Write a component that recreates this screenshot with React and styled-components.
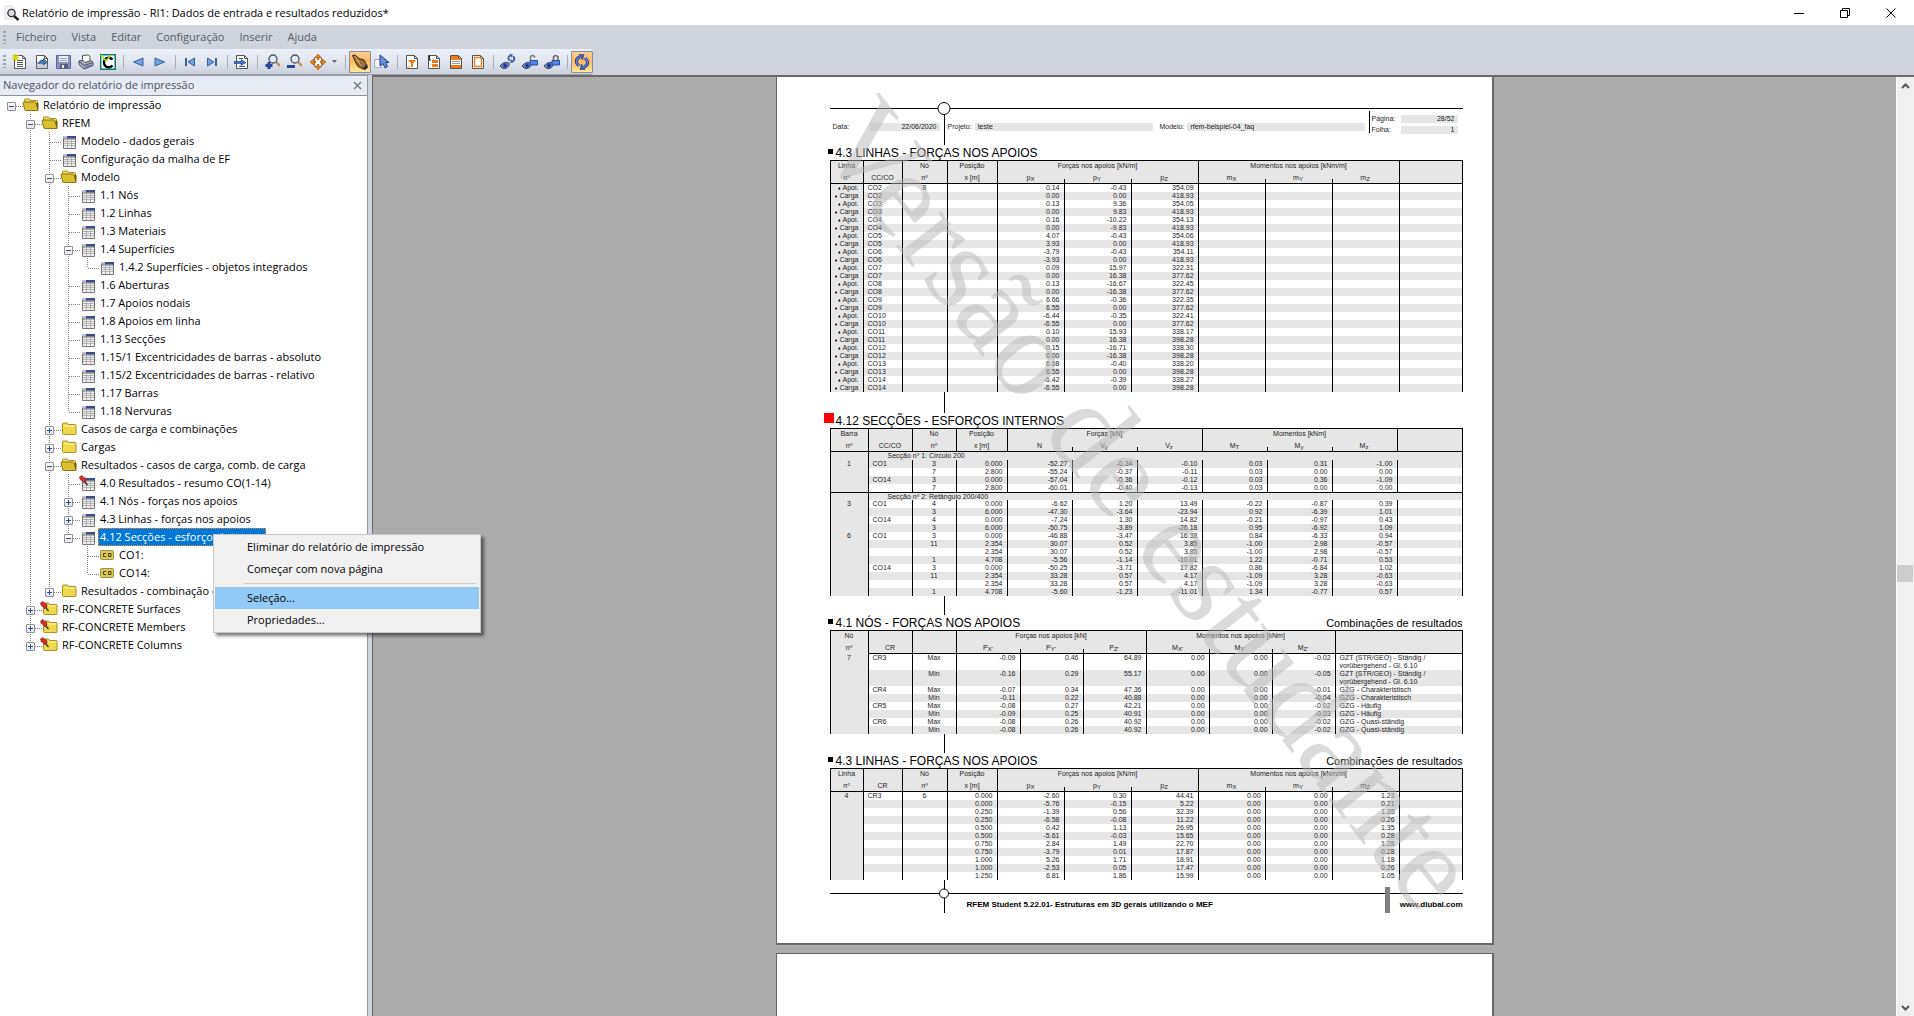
import React from "react";
import styled, { createGlobalStyle, css } from "styled-components";

const UI_FONT = '"Open Sans", "Noto Sans", sans-serif';
const PRINT_FONT = '"Liberation Sans", Arial, sans-serif';
const STRIPE = "#e6e6e6";

const GlobalStyle = createGlobalStyle`
  *, *::before, *::after { box-sizing: border-box; }
  body { margin: 0; font-family: ${UI_FONT}; font-size: 11px; color: #000; }
  button { font: inherit; color: inherit; background: none; border: 0; padding: 0; margin: 0; }
`;

/* ---------- window frame ---------- */

const Window = styled.div`
  display: flex;
  flex-direction: column;
  height: 100vh;
  overflow: hidden;
  background: #d0d4dd;
`;

const TitleBar = styled.header`
  display: flex;
  align-items: center;
  height: 25px;
  flex: none;
  background: #fff;
  padding-left: 4px;
`;

const TitleText = styled.h1`
  flex: 1;
  margin: 0 0 0 2px;
  font-size: 11px;
  font-weight: 400;
  line-height: 24px;
  white-space: nowrap;
`;

const WindowButton = styled.button`
  display: flex;
  align-items: center;
  justify-content: center;
  width: 46px;
  height: 24px;
`;

const MenuBar = styled.nav`
  display: flex;
  align-items: center;
  gap: 15px;
  height: 24px;
  flex: none;
  padding-left: 3px;
  color: #565c6b;
`;

const Grip = styled.span`
  width: 3px;
  height: 13px;
  margin-right: ${(p) => (p.$tight ? "3px" : "-5px")};
  background: repeating-linear-gradient(#9da2ae 0 2px, transparent 2px 4px);
`;

const MenuEntry = styled.button`
  line-height: 24px;
`;

const ToolBar = styled.div`
  display: flex;
  align-items: center;
  align-self: flex-start;
  height: 26px;
  flex: none;
  padding-left: 3px;
  background: linear-gradient(#ebeff8, #e3e7f0 45%, #cdd1dc);
  border-bottom: 1px solid #9a9ea9;
  border-radius: 0 3px 3px 0;
`;

const ToolButton = styled.button`
  display: flex;
  align-items: center;
  justify-content: center;
  width: 22px;
  height: 22px;
  ${(p) =>
    p.$active &&
    css`
      border: 1px solid #8c8f98;
      border-radius: 1px;
      background: linear-gradient(#fbcf9c, #fbb85f 45%, #ffe79a);
    `}
`;

const DropButton = styled(ToolButton)`
  width: 36px;
  gap: 6px;
`;

const ToolSeparator = styled.span`
  width: 1px;
  height: 14px;
  margin: 0 3px 0 4px;
  background: #a9adb8;
`;

/* ---------- navigator ---------- */

const Workspace = styled.div`
  display: grid;
  grid-template-columns: 368px 4px 1fr;
  flex: 1;
  min-height: 0;
`;

const Navigator = styled.aside`
  display: flex;
  flex-direction: column;
  min-height: 0;
  background: #fff;
  border-top: 1px solid #9a9ea9;
  border-right: 1px solid #9a9a9a;
`;

const NavigatorHead = styled.div`
  display: flex;
  align-items: center;
  justify-content: space-between;
  height: 20px;
  padding: 0 5px 0 3px;
  background: #e7ebf4;
  border-bottom: 1px solid #8f939e;
  color: #4b5160;
`;

const NavigatorTitle = styled.h2`
  margin: 0;
  font-size: 11px;
  line-height: 16px;
  height: 18px;
  font-weight: 400;
`;

const Tree = styled.ul`
  margin: 0;
  padding: 0 0 0 2px;
  list-style: none;
`;

const TreeRow = styled.li`
  display: flex;
  height: 18px;
`;

const Guide = styled.span`
  position: relative;
  display: flex;
  justify-content: center;
  width: 19px;
  height: 18px;
  flex: none;
  padding-top: 6px;
  background-image: ${(p) =>
    p.$line ? "repeating-linear-gradient(#808080 0 1px, transparent 1px 2px)" : "none"};
  background-repeat: no-repeat;
  background-position: 9px 0;
  background-size: 1px ${(p) => (p.$line === "half" ? "10px" : "18px")};
`;

const Branch = styled.span`
  position: absolute;
  left: 10px;
  top: 10px;
  width: 11px;
  height: 1px;
  background: repeating-linear-gradient(90deg, #808080 0 1px, transparent 1px 2px);
`;

const Toggle = styled.button`
  position: relative;
  width: 9px;
  height: 9px;
  display: flex;
  border: 1px solid #919191;
  border-radius: 1px;
  background: linear-gradient(#fff, #e4e4e4);
`;

const IconSlot = styled.span`
  width: 22px;
  height: 18px;
  flex: none;
`;

const NodeLabel = styled.span`
  height: 18px;
  line-height: 18px;
  white-space: nowrap;
  ${(p) =>
    p.$selected &&
    css`
      margin-left: -2px;
      padding: 0 2px;
      background: #0078d7;
      color: #fff;
      outline: 1px dotted #ff8728;
      outline-offset: -1px;
    `}
`;

/* ---------- preview ---------- */

const Preview = styled.main`
  display: grid;
  grid-template-columns: 1fr 18px;
  min-height: 0;
  border-top: 2px solid #696969;
  border-left: 1px solid #696969;
  background: #ababab;
`;

const PageStack = styled.div`
  display: flex;
  flex-direction: column;
  align-items: center;
  gap: 8px;
  min-height: 0;
  overflow: hidden;
`;

const Sheet = styled.article`
  position: relative;
  width: 718px;
  flex: none;
  padding: 31px 29px 30px 53px;
  background: #fff;
  border: solid #696969;
  border-width: 0 2px 2px 1px;
  font-family: ${PRINT_FONT};
  font-size: 7px;
  line-height: 8px;
  color: #1c1c1c;
`;

const NextSheet = styled(Sheet)`
  flex: 1 0 60px;
  border-width: 1px 2px 0 1px;
`;

const Watermark = styled.svg`
  position: absolute;
  inset: 0;
  width: 100%;
  height: 100%;
  overflow: visible;
  pointer-events: none;
`;

const ScrollTrack = styled.div`
  display: flex;
  flex-direction: column;
  background: #f0f0f0;
  border-left: 1px solid #fff;
`;

const ScrollArrow = styled.button`
  display: flex;
  align-items: center;
  justify-content: center;
  height: 17px;
`;

const ScrollGap = styled.div`
  flex: ${(p) => p.$grow} 0 0;
`;

const ScrollThumb = styled.div`
  height: 17px;
  margin-right: 1px;
  background: #cdcdcd;
`;

/* ---------- printed sheet ---------- */

const Rule = styled.div`
  height: 1px;
  background: #000;
`;

const SheetHead = styled.header`
  position: relative;
`;

const HeadFields = styled.div`
  display: flex;
  height: 36px;
`;

const Field = styled.div`
  display: flex;
  gap: ${(p) => p.$gap || 3}px;
  flex: ${(p) => p.$flex || "none"};
  width: ${(p) => (p.$width ? p.$width + "px" : "auto")};
  margin-top: 14px;
  padding: 0 4px 0 3px;
`;

const FieldValue = styled.span`
  flex: 1;
  height: 8px;
  padding: 0 3px;
  background: ${STRIPE};
  text-align: ${(p) => (p.$end ? "right" : "left")};
`;

const Stem = styled.div`
  width: 1px;
  height: ${(p) => (p.$height ? p.$height + "px" : "auto")};
  margin-left: ${(p) => (p.$inline ? 0 : 114)}px;
  background: #000;
`;

const PageNumbers = styled.div`
  display: grid;
  grid-template-columns: 26px 57px;
  grid-auto-rows: 8px;
  gap: 3px;
  height: 22px;
  margin: 2px 5px 0 0;
  padding: 4px 0 0 2px;
  border-left: 1px solid #000;
`;

const Ring = styled.svg`
  position: absolute;
  left: 107px;
  top: ${(p) => p.$top}px;
`;

const SectionHead = styled.div`
  display: flex;
  height: 15px;
  margin-left: -6px;
`;

const Marker = styled.span`
  flex: none;
  width: ${(p) => (p.$current ? 10 : 5)}px;
  height: ${(p) => (p.$current ? 10 : 5)}px;
  margin: ${(p) => (p.$current ? "0 2px 0 0" : "4px 3px 0 4px")};
  background: ${(p) => (p.$current ? "#f00" : "#000")};
`;

const SectionTitle = styled.h3`
  flex: 1;
  margin: 0;
  font-size: 12px;
  line-height: 17px;
  font-weight: 400;
  color: #000;
`;

const SectionNote = styled.span`
  font-size: 11px;
  line-height: 17px;
  color: #000;
`;

const DataTable = styled.table`
  width: 100%;
  table-layout: fixed;
  border-collapse: separate;
  border-spacing: 0;
  th, td { padding: 0; font-weight: 400; white-space: nowrap; }
`;

const HeadCell = styled.th`
  position: relative;
  height: 12px;
  line-height: ${(p) => (p.$top ? 9 : 10)}px;
  vertical-align: ${(p) => (p.$top ? "top" : "middle")};
  background: ${STRIPE};
  text-align: center;
  border: 0 solid #000;
  border-top-width: ${(p) => (p.$top ? 1 : 0)}px;
  border-bottom-width: ${(p) => (p.$bottom ? 1 : 0)}px;
  border-left-width: ${(p) => (p.$tick ? 0 : 1)}px;
  &:last-child { border-right-width: 1px; }
  ${(p) =>
    p.$tick &&
    css`
      &::before {
        content: "";
        position: absolute;
        left: 0;
        bottom: 0;
        width: 1px;
        height: 4px;
        background: #000;
      }
    `}
`;

const Sub = styled.span`
  font-size: 6px;
  position: relative;
  top: 1px;
`;

const Diamond = styled.span`
  font-size: 5px;
  color: #000;
  margin-right: 2px;
`;

const pads = {
  right: "0 4px 0 0",
  left: "0 0 0 4px",
  center: "0",
  support: "0 4px 0 0",
};

const Cell = styled.td`
  height: ${(p) => p.$height || 8}px;
  line-height: 8px;
  vertical-align: top;
  border-left: 1px solid #000;
  background: ${(p) => (p.$shade ? STRIPE : "#fff")};
  && {
    padding: ${(p) => pads[p.$align]};
    white-space: ${(p) => (p.$wrap ? "pre-line" : "nowrap")};
  }
  text-align: ${(p) => (p.$align === "support" ? "right" : p.$align)};
  &:last-child { border-right: 1px solid #000; }
`;

const BandCell = styled(Cell)`
  line-height: 7px;
  border-top: ${(p) => (p.$ruled ? "1px solid #000" : "0")};
  && { padding-left: ${(p) => (p.$indent ? 19 : 0)}px; }
`;

const SheetFoot = styled.footer`
  position: relative;
  height: 33px;
  padding-top: 13px;
`;

const FootText = styled.div`
  display: flex;
  justify-content: space-between;
  padding: 5px 0 0 137px;
  font-size: 8px;
  line-height: 11px;
  font-weight: 700;
  color: #000;
`;

const FootStem = styled.span`
  position: absolute;
  left: 114px;
  top: 0;
  bottom: 0;
  width: 1px;
  background: #000;
`;

const FootBar = styled.span`
  position: absolute;
  right: 73px;
  top: 7px;
  bottom: 0;
  width: 5px;
  background: #808080;
`;

/* ---------- context menu ---------- */

const ContextMenu = styled.div`
  position: absolute;
  left: 213px;
  top: 534px;
  width: 268px;
  padding: 1px;
  background: #f1f1f1;
  border: 1px solid #c8c8c8;
  box-shadow: 3px 3px 3px rgba(0, 0, 0, 0.5);
`;

const MenuItem = styled.button`
  display: block;
  width: 100%;
  height: 22px;
  line-height: 22px;
  padding-left: 32px;
  text-align: left;
  background: ${(p) => (p.$hot ? "#91c9f7" : "transparent")};
`;

const MenuDivider = styled.hr`
  height: 1px;
  margin: 3px 2px 3px 28px;
  border: 0;
  background: #d0d0d0;
`;

/* ---------- icons ---------- */

const Svg = ({ children, w = 16, h = 16 }) => (
  <svg width={w} height={h} viewBox={`0 0 ${w} ${h}`} fill="none" aria-hidden="true">
    {children}
  </svg>
);

const Paper = ({ children, fold = true }) => (
  <>
    <path d={fold ? "M2.5 1.5h8l3 3v10h-11z" : "M2.5 1.5h11v13h-11z"} fill="#fff" stroke="#555" />
    {fold && <path d="M10.5 1.5v3h3" stroke="#555" />}
    {children}
  </>
);

const Eye = () => (
  <>
    <path d="M0 12q4-5 9-3q1 4-4 5.500q-3 .5-5-2.500z" fill="#8a93a8" stroke="#39415c" />
    <circle cx="5" cy="11.500" r="2.500" fill="#2f57c9" />
    <circle cx="5" cy="11.500" r="1" fill="#0b1440" />
  </>
);

const Cycle = () => (
  <>
    <path d="M6 3Q1.500 4.500 2.800 9l2 3" stroke="#1d3076" strokeWidth="3" />
    <path d="M6 3Q1.500 4.500 2.800 9l2 3" stroke="#5f8cec" strokeWidth="1.400" />
    <path d="M10 13q4.500-1.500 3.200-6l-2-3" stroke="#1d3076" strokeWidth="3" />
    <path d="M10 13q4.500-1.500 3.200-6l-2-3" stroke="#5f8cec" strokeWidth="1.400" />
    <path d="M5 .5h5L8.500 6z M11 15.500H6L7.500 10z" fill="#3d66cf" stroke="#1d3076" strokeWidth=".6" />
  </>
);

const Lens = ({ x = 9, y = 5 }) => (
  <>
    <path d={`M${x + 3} ${y + 3}l4 4`} stroke="#d08a4c" strokeWidth="2.400" />
    <circle cx={x} cy={y} r="4" fill="#dfeaf8" stroke="#4a5468" strokeWidth="1.300" />
    <path d={`M${x - 2} ${y - 1}l2-2`} stroke="#fff" />
  </>
);

const glyphs = {
  create: (
    <Svg>
      <Paper><path d="M5 6.500h6M5 8.500h6M5 10.500h6M5 12.500h6" stroke="#555" /></Paper>
      <path d="M3.500 0v7M0 3.500h7M1 1l5 5M6 1l-5 5" stroke="#d8d400" strokeWidth="1.200" />
    </Svg>
  ),
  open: (
    <Svg>
      <Paper><path d="M2.500 9h11v5.500h-11z" fill="#c9ced8" stroke="#666" /></Paper>
      <path d="M4.500 9.500q1-4 5-3.500V4.500L13 8l-3.500 3V9q-3-.5-5 .5z" fill="#4276b8" stroke="#224b85" strokeWidth=".6" />
    </Svg>
  ),
  save: (
    <Svg>
      <path d="M.5 1.500h14v13h-14z" fill="#8591c4" stroke="#5d6798" />
      <path d="M3 2h9v6H3z" fill="#eef0f8" />
      <path d="M4 4.500h7M4 6.500h7" stroke="#9aa2c8" />
      <path d="M4 10h8v4H4z" fill="#5a5f78" />
      <path d="M6 11h2v3H6z" fill="#fff" />
    </Svg>
  ),
  print: (
    <Svg>
      <path d="M1 7L11 5l4 3.500v3L6 15 1 10.500z" fill="#aab0c0" stroke="#444a5a" />
      <path d="M1 7l5 4.500 9-3" stroke="#444a5a" />
      <path d="M4.500 6V1.500L10 1l2 1.500V7l-5 1.500z" fill="#fff" stroke="#555" />
      <path d="M7 12.500l6-2v1.500l-6 2z" fill="#6b72c8" />
    </Svg>
  ),
  report: (
    <Svg>
      <path d="M0 0h16v16H0z" fill="#0d7d71" />
      <path d="M1.500 1.500h13v13h-13z" fill="#fff" />
      <path d="M12.500 11.500A4.800 4.800 0 1 1 12.500 5.500" stroke="#000" strokeWidth="2.400" />
      <path d="M1 1l5 6 5-6" stroke="#b4dc32" strokeWidth="1.600" />
    </Svg>
  ),
  prev: <Svg><path d="M13 4v8L3.500 8z" fill="#6ea3e6" stroke="#3c5f96" /></Svg>,
  next: <Svg><path d="M3 4v8l9.500-4z" fill="#6ea3e6" stroke="#3c5f96" /></Svg>,
  first: <Svg><path d="M12.500 4v8L6 8z" fill="#6ea3e6" stroke="#3c5f96" /><path d="M4 4v8" stroke="#3c5f96" strokeWidth="2" /></Svg>,
  last: <Svg><path d="M3.500 4v8L10 8z" fill="#6ea3e6" stroke="#3c5f96" /><path d="M12 4v8" stroke="#3c5f96" strokeWidth="2" /></Svg>,
  goto: (
    <Svg>
      <Paper><path d="M5 4.500h4M5 12.500h6" stroke="#555" /></Paper>
      <path d="M0 7.500h7V5.500l5 3-5 3v-2H0z" fill="#3d6fc0" stroke="#1e3f80" strokeWidth=".6" />
    </Svg>
  ),
  zoomIn: <Svg><Lens /><path d="M5 8v7M1.500 11.500h7" stroke="#27459c" strokeWidth="3" /></Svg>,
  zoomOut: <Svg><Lens /><path d="M1 12.500h8" stroke="#27459c" strokeWidth="3" /></Svg>,
  fit: (
    <Svg>
      <path d="M4.500 3.500h7v9h-7z" fill="#fff" stroke="#777" />
      <path d="M8 0l3 3.500H9v2H7v-2H5zM8 16l3-3.500H9v-2H7v2H5zM0 8l3.500-3v2h2v2h-2v2zM16 8l-3.500-3v2h-2v2h2v2z" fill="#ef7d1a" stroke="#a3500a" strokeWidth=".6" />
    </Svg>
  ),
  hand: (
    <Svg>
      <path d="M.5 1.500l2.500-.5 4 3.500 5 1.500 2.500 5-3.500 4-5-2.500L3.500 8z" fill="#9a6f3a" stroke="#3b2409" />
      <path d="M2 2l6 6M4 6l5 5" stroke="#d3a96c" />
      <path d="M10.500 15l4.500-5 1 3.500-3 2.500z" fill="#2b2b44" />
    </Svg>
  ),
  pick: (
    <Svg>
      <path d="M.5 5.500h7v8h-7z" fill="#f2f4fa" stroke="#a0a6b5" />
      <path d="M6 1v11l3-2.500L11 14l2.500-1.500-2-4H15z" fill="#6d90de" stroke="#1f3a80" />
    </Svg>
  ),
  filter: <Svg><Paper><path d="M4 6h8l-3 3.500V13H7V9.500z" fill="#ef7d1a" /><path d="M3.500 13h2" stroke="#ef7d1a" /></Paper></Svg>,
  numbering: (
    <Svg>
      <Paper><path d="M6 6h6v3H6zM6 10h6v3H6z" fill="#ef7d1a" /></Paper>
      <path d="M2 2.500l1.500-1V6M2 6h3" stroke="#222" />
    </Svg>
  ),
  header: <Svg><Paper><path d="M3 2h7v2.500h3V6H3zM3 11h10v3H3z" fill="#ef7d1a" /><path d="M4 7.500h8M4 9.500h8" stroke="#999" /></Paper></Svg>,
  frame: <Svg><Paper><path d="M4.500 3.500h5.500l1.500 1.500v7.500h-7z" stroke="#ef7d1a" strokeWidth="1.400" /></Paper></Svg>,
  eyeCycle: <Svg><Eye /><g transform="translate(7 0) scale(.55)"><Cycle /></g></Svg>,
  eyeOpen: <Svg><Eye /><path d="M8.500 6V3q1-2.500 3.500-1l1 1.500" stroke="#777" strokeWidth="1.500" /><path d="M8 6.500h7.500V11H8z" fill="#5a86e6" stroke="#2a4aa0" /></Svg>,
  eyeLocked: <Svg><Eye /><path d="M9.500 6V3q2-3 4.500 0v3" stroke="#666" strokeWidth="1.500" /><path d="M8 6.500h7.500V11H8z" fill="#5a86e6" stroke="#2a4aa0" /></Svg>,
  refresh: <Svg><Cycle /></Svg>,
};

const Pin = ({ x = 2 }) => (
  <g transform={`translate(${x} 1)`}>
    <path d="M5 6l3.500 4" stroke="#333" strokeWidth="1.300" />
    <path d="M.5 2L3 .5l1.500 2L6.500 3l.5 3-2.500 1.500-1-2-2-.5z" fill="#d9302c" stroke="#8d1412" strokeWidth=".7" />
  </g>
);

const ClosedFolder = () => (
  <>
    <path d="M3.500 5V4q0-1 1-1h4l1 1.500h6.500q1 0 1 1V14q0 .5-1 .5h-11.500q-1 0-1-1z" fill="#f0d94a" stroke="#a8902a" />
    <path d="M4.500 6h11.500" stroke="#fdf3a6" />
  </>
);

const nodeIcons = {
  folderOpen: (
    <Svg w={20} h={18}>
      <path d="M3.500 13V4q0-1 1-1h4l1 1.500h6q1 0 1 1V13z" fill="#efdc6a" stroke="#a38b25" />
      <path d="M2 6.500q0-.5 1-.5h10.500q1 0 1.500 1l2 7.500H5q-1 0-1.300-1z" fill="#dcc02e" stroke="#8a7415" />
      <path d="M15.500 7.500l1.500-.5v6.500" fill="#6d5a0c" stroke="#6d5a0c" />
    </Svg>
  ),
  folder: <Svg w={20} h={18}><ClosedFolder /></Svg>,
  folderPinned: <Svg w={20} h={18}><ClosedFolder /><Pin x={0} /></Svg>,
  table: <TableIcon />,
  tablePinned: <TableIcon pinned />,
  combo: (
    <Svg w={20} h={18}>
      <rect x="3.500" y="4.500" width="13" height="9" rx="1" fill="#d6c75e" stroke="#a3973c" />
      <path d="M9 7.500H6.500v3H9M11.500 7.500H14v3h-2.500z" stroke="#4d4617" />
    </Svg>
  ),
};

function TableIcon({ pinned }) {
  return (
    <Svg w={20} h={18}>
      <path d="M4.500 4.500h12v12h-12z" fill="#f1f1f1" stroke="#777" />
      <path d="M4 4h4v2.500H4z" fill="#b9bdc8" />
      <path d="M8 4h9v2.500H8z" fill="#3a4c8a" />
      <path d="M4 7h13" stroke="#555" strokeWidth=".8" />
      <path d="M8.500 7v9M12.500 7v9M5 9.500h11M5 11.500h11M5 13.500h11" stroke="#a5a5a5" strokeWidth=".8" />
      {pinned && <Pin x={1} />}
    </Svg>
  );
}

/* ---------- content ---------- */

const tools = [
  ["create", "Novo"], ["open", "Abrir"], ["save", "Guardar"], ["print", "Imprimir"], ["report", "Relatório"], null,
  ["prev", "Página anterior"], ["next", "Página seguinte"], null,
  ["first", "Primeira página"], ["last", "Última página"], null,
  ["goto", "Ir para página"], null,
  ["zoomIn", "Ampliar"], ["zoomOut", "Reduzir"], ["fit", "Ajustar", "drop"], null,
  ["hand", "Mover", "active"], ["pick", "Selecionar"], null,
  ["filter", "Seleção"], ["numbering", "Numeração"], ["header", "Cabeçalho"], ["frame", "Moldura"], null,
  ["eyeCycle", "Atualizar vista"], ["eyeOpen", "Desbloquear"], ["eyeLocked", "Bloquear"], null,
  ["refresh", "Atualizar", "active"],
];

const n = (label, icon = "table", children, state) => ({ label, icon, children, state });

const tree = [
  n("Relatório de impressão", "folderOpen", [
    n("RFEM", "folderOpen", [
      n("Modelo - dados gerais"),
      n("Configuração da malha de EF"),
      n("Modelo", "folderOpen", [
        n("1.1 Nós"),
        n("1.2 Linhas"),
        n("1.3 Materiais"),
        n("1.4 Superfícies", "table", [n("1.4.2 Superfícies - objetos integrados")]),
        n("1.6 Aberturas"),
        n("1.7 Apoios nodais"),
        n("1.8 Apoios em linha"),
        n("1.13 Secções"),
        n("1.15/1 Excentricidades de barras - absoluto"),
        n("1.15/2 Excentricidades de barras - relativo"),
        n("1.17 Barras"),
        n("1.18 Nervuras"),
      ]),
      n("Casos de carga e combinações", "folder", [], "closed"),
      n("Cargas", "folder", [], "closed"),
      n("Resultados - casos de carga, comb. de carga", "folderOpen", [
        n("4.0 Resultados - resumo CO(1-14)", "tablePinned"),
        n("4.1 Nós - forças nos apoios", "table", [], "closed"),
        n("4.3 Linhas - forças nos apoios", "table", [], "closed"),
        n("4.12 Secções - esforços internos", "table", [n("CO1:", "combo"), n("CO14:", "combo")], "selected"),
      ]),
      n("Resultados - combinação de resultados", "folder", [], "closed"),
    ]),
    n("RF-CONCRETE Surfaces", "folderPinned", [], "closed"),
    n("RF-CONCRETE Members", "folderPinned", [], "closed"),
    n("RF-CONCRETE Columns", "folderPinned", [], "closed"),
  ]),
];

const flatten = (nodes, guides = []) =>
  nodes.flatMap((node, i) => {
    const last = i === nodes.length - 1;
    const own = guides.length ? (last ? "half" : "full") : null;
    return [
      { node, guides, own },
      ...flatten(node.children || [], [...guides, guides.length && !last ? "full" : null]),
    ];
  });

const reactions = [
  ["0.14", "-0.43", "354.09"], ["0.00", "0.00", "418.93"],
  ["0.13", "9.36", "354.05"], ["0.00", "9.83", "418.93"],
  ["0.16", "-10.22", "354.13"], ["0.00", "-9.83", "418.93"],
  ["4.07", "-0.43", "354.06"], ["3.93", "0.00", "418.93"],
  ["-3.79", "-0.43", "354.11"], ["-3.93", "0.00", "418.93"],
  ["0.09", "15.97", "322.31"], ["0.00", "16.38", "377.62"],
  ["0.13", "-16.67", "322.45"], ["0.00", "-16.38", "377.62"],
  ["6.66", "-0.36", "322.35"], ["6.55", "0.00", "377.62"],
  ["-6.44", "-0.35", "322.41"], ["-6.55", "0.00", "377.62"],
  ["0.10", "15.93", "338.17"], ["0.00", "16.38", "398.28"],
  ["0.15", "-16.71", "338.30"], ["0.00", "-16.38", "398.28"],
  ["6.68", "-0.40", "338.20"], ["6.55", "0.00", "398.28"],
  ["-6.42", "-0.39", "338.27"], ["-6.55", "0.00", "398.28"],
].map((v, i) => ({
  shade: i % 2 === 1,
  cells: [i % 2 ? "Carga" : "Apoi.", "CO" + (2 + (i >> 1)), i ? "" : "8", "", ...v, "", "", "", ""],
}));

const split = (lines, flip) =>
  lines.map((line, i) => ({ shade: (i % 2 === 1) !== flip, cells: [...line.split("|"), ""] }));

const forces = [
  { band: "Secção nº 1: Círculo 200" },
  ...split([
    "1|CO1|3|0.000|-52.27|-0.34|-0.10|0.03|0.31|-1.00",
    "||7|2.800|-55.24|-0.37|-0.11|0.03|0.00|0.00",
    "|CO14|3|0.000|-57.04|-0.36|-0.12|0.03|0.36|-1.09",
    "||7|2.800|-60.01|-0.40|-0.13|0.03|0.00|0.00",
  ], true),
  { band: "Secção nº 2: Retângulo 200/400", ruled: true },
  ...split([
    "3|CO1|4|0.000|-6.62|1.20|13.49|-0.22|-0.87|0.39",
    "||3|6.000|-47.30|-3.64|-23.94|0.92|-6.39|1.01",
    "|CO14|4|0.000|-7.24|1.30|14.82|-0.21|-0.97|0.43",
    "||3|6.000|-50.75|-3.89|-26.18|0.95|-6.92|1.09",
    "6|CO1|3|0.000|-46.88|-3.47|16.38|0.84|-6.33|0.94",
    "||11|2.354|30.07|0.52|3.85|-1.00|2.98|-0.57",
    "|||2.354|30.07|0.52|3.85|-1.00|2.98|-0.57",
    "||1|4.708|-5.56|-1.14|-10.01|1.22|-0.71|0.53",
    "|CO14|3|0.000|-50.25|-3.71|17.82|0.86|-6.84|1.02",
    "||11|2.354|33.28|0.57|4.17|-1.09|3.28|-0.63",
    "|||2.354|33.28|0.57|4.17|-1.09|3.28|-0.63",
    "||1|4.708|-5.60|-1.23|-11.01|1.34|-0.77|0.57",
  ], false),
];

const GZT = "GZT (STR/GEO) - Ständig /\nvorübergehend - Gl. 6.10";

const nodal = [
  ["7", "CR3", "Max", "-0.09", "0.46", "64.89", "0.00", "0.00", "-0.02", GZT],
  ["", "", "Min", "-0.16", "0.29", "55.17", "0.00", "0.00", "-0.05", GZT],
  ["", "CR4", "Max", "-0.07", "0.34", "47.36", "0.00", "0.00", "-0.01", "GZG - Charakteristisch"],
  ["", "", "Min", "-0.11", "0.22", "40.88", "0.00", "0.00", "-0.04", "GZG - Charakteristisch"],
  ["", "CR5", "Max", "-0.08", "0.27", "42.21", "0.00", "0.00", "-0.02", "GZG - Häufig"],
  ["", "", "Min", "-0.09", "0.25", "40.91", "0.00", "0.00", "-0.03", "GZG - Häufig"],
  ["", "CR6", "Max", "-0.08", "0.26", "40.92", "0.00", "0.00", "-0.02", "GZG - Quasi-ständig"],
  ["", "", "Min", "-0.08", "0.26", "40.92", "0.00", "0.00", "-0.02", "GZG - Quasi-ständig"],
].map((cells, i) => ({ shade: i % 2 === 1, height: i < 2 ? 16 : 8, cells }));

const envelope = split([
  "4|CR3|6|0.000|-2.60|0.30|44.41|0.00|0.00|1.23",
  "|||0.000|-5.76|-0.15|5.22|0.00|0.00|0.21",
  "|||0.250|-1.39|0.56|32.39|0.00|0.00|1.35",
  "|||0.250|-6.58|-0.08|11.22|0.00|0.00|0.26",
  "|||0.500|0.42|1.13|26.95|0.00|0.00|1.35",
  "|||0.500|-5.61|-0.03|15.65|0.00|0.00|0.28",
  "|||0.750|2.84|1.49|22.70|0.00|0.00|1.28",
  "|||0.750|-3.79|0.01|17.87|0.00|0.00|0.28",
  "|||1.000|5.26|1.71|18.91|0.00|0.00|1.18",
  "|||1.000|-2.53|0.05|17.47|0.00|0.00|0.26",
  "|||1.250|6.81|1.86|15.99|0.00|0.00|1.05",
], false);

const lineSubs = [["p", "X"], ["p", "Y"], ["p", "Z"], ["m", "X"], ["m", "Y"], ["m", "Z"]];
const lineWidths = [33, 39, 45, 50, 67, 67, 67, 67, 67, 67, 64];
const lineAlign = ["center", "left", "center", ...Array(7).fill("right"), "left"];

const sections = [
  {
    title: "4.3 LINHAS - FORÇAS NOS APOIOS",
    widths: lineWidths,
    align: ["support", ...lineAlign.slice(1)],
    lead: [["Linha", "nº"], ["", "CC/CO"], ["Nó", "nº"], ["Posição", "x [m]"]],
    groups: ["Forças nos apoios [kN/m]", "Momentos nos apoios [kNm/m]"],
    subs: lineSubs,
    rows: reactions,
  },
  {
    title: "4.12 SECÇÕES - ESFORÇOS INTERNOS",
    current: true,
    widths: [38, 44, 44, 51, 65, 65, 65, 65, 65, 65, 66],
    align: lineAlign,
    lead: [["Barra", "nº"], ["", "CC/CO"], ["Nó", "nº"], ["Posição", "x [m]"]],
    groups: ["Forças [kN]", "Momentos [kNm]"],
    subs: [["N", ""], ["V", "y"], ["V", "z"], ["M", "T"], ["M", "y"], ["M", "z"]],
    rows: forces,
  },
  {
    title: "4.1 NÓS - FORÇAS NOS APOIOS",
    note: "Combinações de resultados",
    widths: [38, 44, 44, 64, 63, 63, 63, 63, 63, 128],
    align: ["center", "left", "center", ...Array(6).fill("right"), "left"],
    lead: [["Nó", "nº"], ["", "CR"], ["", ""]],
    openFirst: true,
    groups: ["Forças nos apoios [kN]", "Momentos nos apoios [kNm]"],
    subs: [["P", "X'"], ["P", "Y'"], ["P", "Z'"], ["M", "X'"], ["M", "Y'"], ["M", "Z'"]],
    rows: nodal,
  },
  {
    title: "4.3 LINHAS - FORÇAS NOS APOIOS",
    note: "Combinações de resultados",
    widths: lineWidths,
    align: lineAlign,
    lead: [["Linha", "nº"], ["", "CR"], ["Nó", "nº"], ["Posição", "x [m]"]],
    groups: ["Forças nos apoios [kN/m]", "Momentos nos apoios [kNm/m]"],
    subs: lineSubs,
    rows: envelope,
  },
];

/* ---------- parts ---------- */

function NavigatorTree() {
  return (
    <Tree role="tree" aria-label="Navegador do relatório de impressão">
      {flatten(tree).map(({ node, guides, own }, i) => (
        <TreeRow key={i} role="treeitem" aria-selected={node.state === "selected"}>
          {guides.map((line, g) => <Guide key={g} $line={line} />)}
          <Guide $line={own}>
            <Branch />
            {node.children && (
              <Toggle aria-label={node.state === "closed" ? "Expandir" : "Recolher"}>
                <svg width="7" height="7" viewBox="0 0 7 7" aria-hidden="true">
                  <path d={node.state === "closed" ? "M1 3.500h5M3.500 1v5" : "M1 3.500h5"} stroke="#2b4a9b" />
                </svg>
              </Toggle>
            )}
          </Guide>
          <IconSlot>{nodeIcons[node.icon]}</IconSlot>
          <NodeLabel $selected={node.state === "selected"}>{node.label}</NodeLabel>
        </TreeRow>
      ))}
    </Tree>
  );
}

function ReportTable({ section }) {
  const { widths, align, lead, groups, subs, rows, openFirst } = section;
  return (
    <DataTable>
      <colgroup>
        {widths.map((width, i) => <col key={i} style={{ width }} />)}
      </colgroup>
      <thead>
        <tr>
          {lead.map(([top], i) => <HeadCell key={i} $top>{top}</HeadCell>)}
          {groups.map((g) => <HeadCell key={g} $top colSpan={3}>{g}</HeadCell>)}
          <HeadCell $top />
        </tr>
        <tr>
          {lead.map(([, low], i) => <HeadCell key={i} $bottom={!(openFirst && i === 0)}>{low}</HeadCell>)}
          {subs.map(([base, sub], i) => (
            <HeadCell key={i} $bottom $tick={i % 3 !== 0}>{base}<Sub>{sub}</Sub></HeadCell>
          ))}
          <HeadCell $bottom />
        </tr>
      </thead>
      <tbody>
        {rows.map((row, r) =>
          row.band ? (
            <tr key={r}>
              <BandCell $align="left" $shade $ruled={row.ruled} />
              <BandCell $align="left" $shade $ruled={row.ruled} $indent colSpan={widths.length - 1}>{row.band}</BandCell>
            </tr>
          ) : (
            <tr key={r}>
              {row.cells.map((text, c) => (
                <Cell
                  key={c}
                  $align={align[c]}
                  $shade={row.shade || c === 0}
                  $height={row.height}
                  $wrap={text.includes("\n")}
                >
                  {align[c] === "support" && <Diamond>♦</Diamond>}
                  {text}
                </Cell>
              ))}
            </tr>
          )
        )}
      </tbody>
    </DataTable>
  );
}

function ReportSheet() {
  return (
    <Sheet>
      <SheetHead>
        <Rule />
        <HeadFields>
          <Field $width={114} $gap={21}>Data:<FieldValue $end>22/06/2020</FieldValue></Field>
          <Stem $inline />
          <Field $flex="212 0 0">Projeto:<FieldValue>teste</FieldValue></Field>
          <Field $flex="212 0 0">Modelo:<FieldValue>rfem-beispiel-04_faq</FieldValue></Field>
          <PageNumbers>
            Página:<FieldValue $end>28/52</FieldValue>
            Folha:<FieldValue $end>1</FieldValue>
          </PageNumbers>
        </HeadFields>
        <Ring $top={-6} width="14" height="13" viewBox="0 0 14 13" aria-hidden="true">
          <circle cx="7" cy="6.500" r="6" fill="#fff" stroke="#000" />
        </Ring>
      </SheetHead>
      {sections.map((section, i) => (
        <React.Fragment key={i}>
          {i > 0 && <Stem $height={section.current ? 21 : 19} />}
          <SectionHead>
            <Marker $current={section.current} />
            <SectionTitle>{section.title}</SectionTitle>
            {section.note && <SectionNote>{section.note}</SectionNote>}
          </SectionHead>
          <ReportTable section={section} />
        </React.Fragment>
      ))}
      <SheetFoot>
        <Rule />
        <FootText>
          <span>RFEM Student 5.22.01- Estruturas em 3D gerais utilizando o MEF</span>
          <span>www.dlubal.com</span>
        </FootText>
        <FootStem />
        <FootBar />
        <Ring $top={8} width="14" height="11" viewBox="0 0 14 11" aria-hidden="true">
          <circle cx="7" cy="5.500" r="4.500" fill="#fff" stroke="#000" />
        </Ring>
      </SheetFoot>
      <Watermark>
        <text
          transform="translate(37 64) rotate(52)"
          fontFamily='"Liberation Serif", "Times New Roman", serif'
          fontSize="124"
          fill="#b8b8b8"
          fillOpacity="0.5"
        >
          Versão de estudante
        </text>
      </Watermark>
    </Sheet>
  );
}

export default function App() {
  return (
    <>
      <GlobalStyle />
      <Window>
        <TitleBar>
          <Svg>
            <path d="M1 1h7l2 2v11H1z" fill="#f4f4f4" stroke="#ddd" />
            <circle cx="7.500" cy="8" r="3.600" fill="#dde3ea" stroke="#333" strokeWidth="1.400" />
            <path d="M10 11l4.500 4" stroke="#222" strokeWidth="2.400" />
          </Svg>
          <TitleText>Relatório de impressão - RI1: Dados de entrada e resultados reduzidos*</TitleText>
          <WindowButton aria-label="Minimizar"><Svg w={10} h={10}><path d="M0 5.500h10" stroke="#000" /></Svg></WindowButton>
          <WindowButton aria-label="Restaurar"><Svg w={10} h={10}><path d="M.5 2.500h7v7h-7zM2.500 2.500v-2h7v7h-2" stroke="#000" /></Svg></WindowButton>
          <WindowButton aria-label="Fechar"><Svg w={10} h={10}><path d="M.5.5l9 9M9.500.5l-9 9" stroke="#000" /></Svg></WindowButton>
        </TitleBar>
        <MenuBar>
          <Grip />
          {["Ficheiro", "Vista", "Editar", "Configuração", "Inserir", "Ajuda"].map((m) => (
            <MenuEntry key={m}>{m}</MenuEntry>
          ))}
        </MenuBar>
        <ToolBar role="toolbar">
          <Grip $tight />
          {tools.map((tool, i) => {
            if (!tool) return <ToolSeparator key={i} />;
            const [icon, label, kind] = tool;
            return kind === "drop" ? (
              <DropButton key={i} aria-label={label}>
                {glyphs[icon]}
                <Svg w={5} h={4}><path d="M0 0h5L2.500 3z" fill="#666" /></Svg>
              </DropButton>
            ) : (
              <ToolButton key={i} aria-label={label} $active={kind === "active"}>{glyphs[icon]}</ToolButton>
            );
          })}
        </ToolBar>
        <Workspace>
          <Navigator>
            <NavigatorHead>
              <NavigatorTitle>Navegador do relatório de impressão</NavigatorTitle>
              <button aria-label="Fechar navegador">
                <Svg w={9} h={9}><path d="M1 1l7 7M8 1l-7 7" stroke="#6c6f78" strokeWidth="1.200" /></Svg>
              </button>
            </NavigatorHead>
            <NavigatorTree />
          </Navigator>
          <div />
          <Preview>
            <PageStack>
              <ReportSheet />
              <NextSheet />
            </PageStack>
            <ScrollTrack>
              <ScrollArrow aria-label="Subir"><Svg w={9} h={6}><path d="M1 5l3.500-3.500L8 5" stroke="#555" strokeWidth="2" /></Svg></ScrollArrow>
              <ScrollGap $grow={470} />
              <ScrollThumb />
              <ScrollGap $grow={417} />
              <ScrollArrow aria-label="Descer"><Svg w={9} h={6}><path d="M1 1l3.500 3.500L8 1" stroke="#555" strokeWidth="2" /></Svg></ScrollArrow>
            </ScrollTrack>
          </Preview>
        </Workspace>
        <ContextMenu role="menu">
          <MenuItem role="menuitem">Eliminar do relatório de impressão</MenuItem>
          <MenuItem role="menuitem">Começar com nova página</MenuItem>
          <MenuDivider />
          <MenuItem role="menuitem" $hot>Seleção...</MenuItem>
          <MenuItem role="menuitem">Propriedades...</MenuItem>
        </ContextMenu>
      </Window>
    </>
  );
}
